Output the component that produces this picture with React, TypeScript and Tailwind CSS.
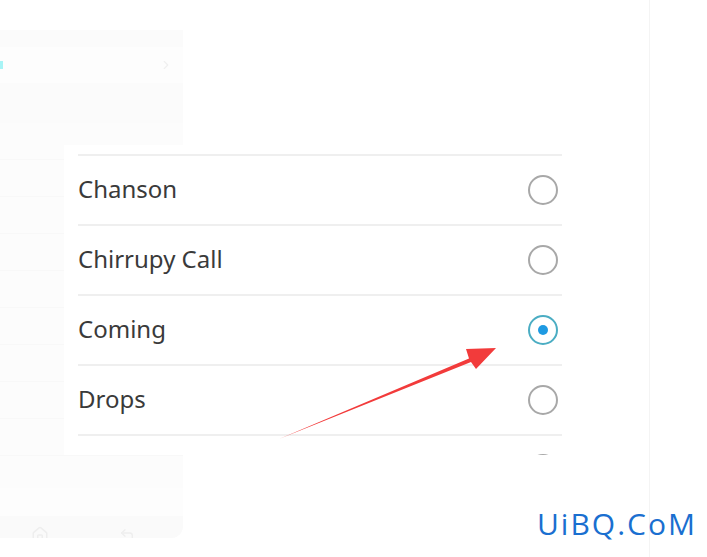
import { ChevronRight, Home, CornerUpLeft } from 'lucide-react';

const ringtones = [
  { name: 'Chanson', selected: false },
  { name: 'Chirrupy Call', selected: false },
  { name: 'Coming', selected: true },
  { name: 'Drops', selected: false },
];

function Radio({ selected }: { selected: boolean }) {
  if (selected) {
    return (
      <div className="w-[30px] h-[30px] rounded-full border-2 border-[#4badc3] flex items-center justify-center">
        <div className="w-[10px] h-[10px] rounded-full bg-[#1e9ae2]" />
      </div>
    );
  }
  return <div className="w-[30px] h-[30px] rounded-full border-2 border-[#a8a8a8]" />;
}

function FadedPhone() {
  return (
    <div className="mt-[30px] w-[183px] h-[508px] bg-[#fcfcfc] rounded-br-xl flex flex-col overflow-hidden">
      <div className="h-[17px] bg-[#fbfbfb]" />
      <div className="h-[36px] bg-[#fdfdfd] flex items-center justify-between pr-[10px]">
        <div className="w-[3px] h-[8px] bg-[#a8f4f6]" />
        <ChevronRight className="w-[14px] h-[14px] text-[#f0f0f0]" />
      </div>
      <div className="h-[40px] bg-[#fbfbfb]" />
      <div className="flex-1 flex flex-col">
        {Array.from({ length: 9 }).map((_, i) => (
          <div key={i} className="h-[37px] border-b border-[#f8f8f8]" />
        ))}
      </div>
      <div className="h-[28px] bg-[#fdfdfd]" />
      <div className="h-[22px] bg-[#fafafa] flex items-end pl-[31px] gap-[70px]">
        <Home className="w-[18px] h-[18px] text-[#eeeeee] -mb-[6px]" />
        <CornerUpLeft className="w-[16px] h-[16px] text-[#eeeeee] -mb-[5px]" />
      </div>
    </div>
  );
}

export default function App() {
  return (
    <div className="relative w-[707px] h-[557px] bg-white overflow-hidden" style={{ fontFamily: '"Noto Sans", Roboto, sans-serif' }}>
      {/* background layer */}
      <div className="flex h-full">
        <FadedPhone />
        <div className="w-[467px] border-r border-[#f4f4f4]" />
      </div>

      {/* ringtone list */}
      <div className="absolute left-[64px] top-[145px] w-[498px] h-[310px] bg-white pl-[14px] pt-[9px] overflow-hidden">
        {ringtones.map((r) => (
          <div key={r.name} className="h-[70px] border-t-2 border-[#efefef] flex items-center justify-between pr-[4px]">
            <span className="text-[24px] text-[#3a3a3a] leading-none -mt-[2px]">{r.name}</span>
            <Radio selected={r.selected} />
          </div>
        ))}
        <div className="h-[70px] border-t-2 border-[#efefef] flex justify-end pr-[4px] pt-[18px]">
          <Radio selected={false} />
        </div>
      </div>

      {/* arrow */}
      <svg className="absolute left-0 top-0" width="707" height="557" viewBox="0 0 707 557">
        <polygon
          points="279,439 469,358.5 466,349 496,348 476,369 471,362"
          fill="#f23b3b"
        />
      </svg>

      {/* watermark */}
      <div className="absolute left-[537px] top-[509px] text-[30px] leading-none text-[#1a6fd0] tracking-[2px]" style={{ fontFamily: '"Open Sans", sans-serif' }}>
        UiBQ.CoM
      </div>
    </div>
  );
}
